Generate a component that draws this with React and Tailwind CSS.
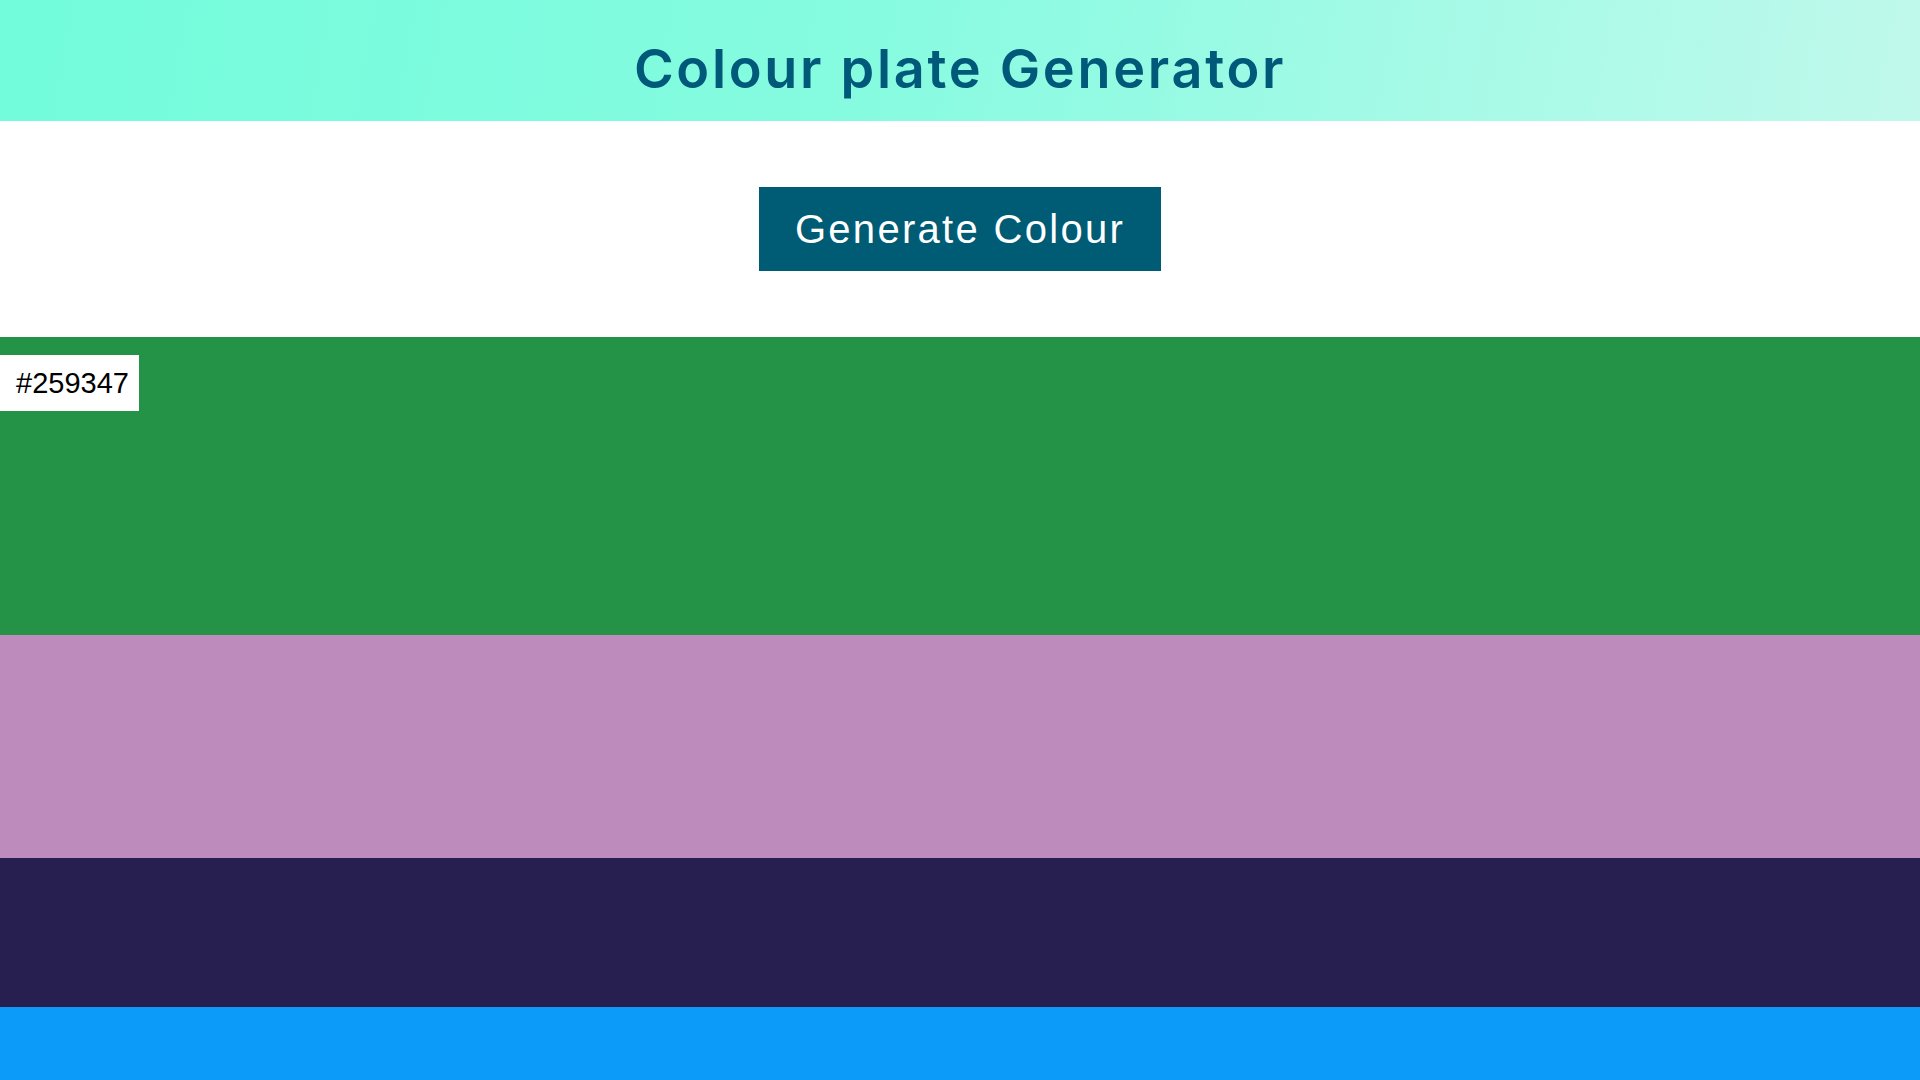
import { useState } from "react";

const palette = [
  { hex: "#259347", h: "h-[298px]" },
  { hex: "#BE8CBC", h: "h-[223px]" },
  { hex: "#271F4F", h: "h-[149px]" },
  { hex: "#0D9BFA", h: "h-[73px]" },
];

export default function App() {
  const [colours] = useState(palette);

  return (
    <div className="min-h-screen bg-white font-['Liberation_Sans',Arial,sans-serif]">
      <header className="flex h-[121px] items-center justify-center bg-[linear-gradient(100deg,#72fcdb_0%,#86fbe0_45%,#c0f9ec_100%)]">
        <h1 className="pt-[16px] font-['Inter',sans-serif] text-[54px] font-semibold tracking-[2.7px] text-[#01597a]">
          Colour plate Generator
        </h1>
      </header>

      <section className="flex h-[216px] items-center justify-center">
        <button className="bg-[#005b75] px-[36px] py-[19px] text-[40px] leading-[46px] tracking-[2.3px] text-white">
          Generate Colour
        </button>
      </section>

      <main className="flex flex-col">
        {colours.map((c, i) => (
          <div key={c.hex} className={`${c.h} relative`} style={{ backgroundColor: c.hex }}>
            {i === 0 && (
              <span className="absolute left-0 top-[18px] bg-white py-[11px] pl-[16px] pr-[10px] text-[29px] leading-[34px] text-black">
                {c.hex}
              </span>
            )}
          </div>
        ))}
      </main>
    </div>
  );
}
